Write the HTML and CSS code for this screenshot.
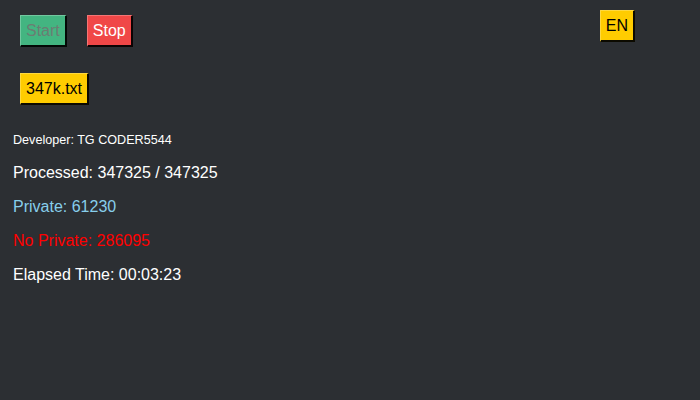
FILE: index.html
```html
<!DOCTYPE html>
<html>
<head>
<meta charset="utf-8">
<link rel="stylesheet" href="styles.css">
</head>
<body>
<div class="header">
  <div class="controls">
    <button class="btn btn-start" disabled>Start</button>
    <button class="btn btn-stop">Stop</button>
  </div>
  <button class="btn btn-lang">EN</button>
</div>
<div class="file-row">
  <button class="btn btn-file">347k.txt</button>
</div>
<div class="stats">
  <p class="dev">Developer: TG CODER5544</p>
  <p class="stat">Processed: 347325 / 347325</p>
  <p class="stat private">Private: 61230</p>
  <p class="stat no-private">No Private: 286095</p>
  <p class="stat">Elapsed Time: 00:03:23</p>
</div>
</body>
</html>
```
FILE: styles.css
```css
html, body {
  margin: 0;
  padding: 0;
  background: #2c2f33;
  font-family: "Liberation Sans", Arial, sans-serif;
  color: #ffffff;
  height: 100%;
}
.header {
  display: flex;
  align-items: flex-start;
  padding: 10px 65px 0 20px;
}
.controls {
  display: flex;
  gap: 20px;
  margin-top: 5px;
}
.btn {
  font-family: "Liberation Sans", Arial, sans-serif;
  font-size: 16px;
  line-height: 18px;
  padding: 5px 5px;
  border-style: solid;
  border-width: 1px 2px 2px 1px;
  border-color: rgba(255,255,255,0.25) rgba(0,0,0,0.95) rgba(0,0,0,0.95) rgba(255,255,255,0.25);
  margin: 0;
  cursor: pointer;
  height: 32px;
  box-sizing: border-box;
}
.header .btn-lang {
  margin-left: auto;
}
.btn-start {
  background: #43b581;
  color: #6b7d73;
}
.btn-stop {
  background: #f04747;
  color: #ffffff;
}
.btn-lang, .btn-file {
  background: #ffcc00;
  color: #000000;
}
.file-row {
  padding: 26px 0 0 20px;
}
.stats {
  padding: 28px 13px 0 13px;
}
.stats p {
  margin: 0;
}
.dev {
  font-size: 12.6px;
  line-height: 14px;
  margin-bottom: 17px !important;
}
.stat {
  font-size: 16px;
  line-height: 18px;
  margin-bottom: 16px !important;
}
.private {
  color: #87ceeb;
}
.no-private {
  color: #ff0000;
}
```
